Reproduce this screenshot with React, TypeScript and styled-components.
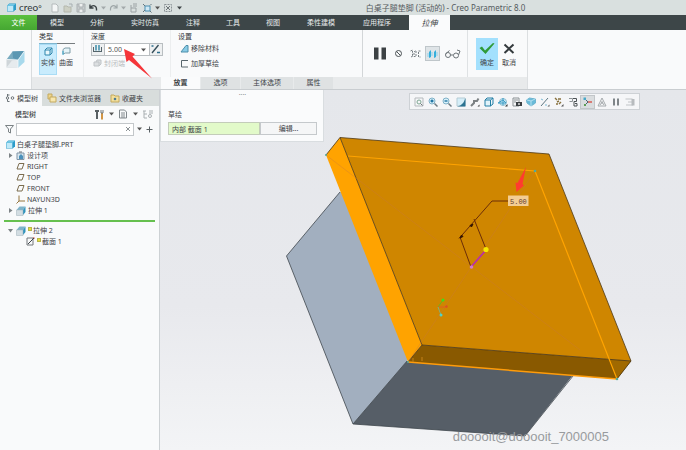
import React from "react";
import styled, { createGlobalStyle, css } from "styled-components";

const Global = createGlobalStyle`
  * { box-sizing: border-box; }
  body {
    margin: 0;
    font: 7px/11px "Noto Sans", "Noto Sans CJK SC", sans-serif;
    color: #3e4347;
    background: #e6e8ec;
  }
  button, input, select { font: inherit; color: inherit; }
  svg { display: block; flex: none; }
`;

const App = styled.div`
  min-height: 100vh;
  display: flex;
  flex-direction: column;
`;

const plainButton = css`
  border: 0;
  padding: 0;
  background: transparent;
  white-space: nowrap;
`;

/* ---------- title bar ---------- */
const TitleBar = styled.header`
  display: flex;
  align-items: center;
  height: 15px;
  background: #d9e0df;
`;
const Brand = styled.div`
  display: flex;
  align-items: center;
  gap: 3px;
  width: 50px;
  padding-left: 7px;
  font: 10px/14px "Lato", sans-serif;
  color: #30383b;
`;
const QuickTools = styled.div`
  display: flex;
  align-items: center;
  gap: 3px;
`;
const Title = styled.h1`
  flex: 1;
  margin: 0;
  padding-left: 22px;
  text-align: center;
  font-size: 8px;
  line-height: 14px;
  font-weight: 400;
  color: #555b5e;
`;
const IconButton = styled.button<{ $w?: number }>`
  ${plainButton}
  display: flex;
  align-items: center;
  justify-content: center;
  width: ${(p) => p.$w ?? 10}px;
  height: 11px;
`;

/* ---------- main tabs ---------- */
const MenuBar = styled.nav`
  display: flex;
  height: 15px;
  background: #3d4648;
`;
const MenuTab = styled.button<{ $kind?: "file" | "active"; $wide?: boolean }>`
  ${plainButton}
  padding: 0 ${(p) => (p.$wide ? 14 : 13)}px;
  line-height: 15px;
  color: #e8ecec;
  ${(p) =>
    p.$kind === "file" &&
    css`
      width: 37px;
      padding: 0;
      color: #fff;
      background: linear-gradient(#5cc03f, #45a732);
    `}
  ${(p) =>
    p.$kind === "active" &&
    css`
      width: 41px;
      margin-left: 4px;
      padding: 0;
      font-size: 8px;
      font-style: italic;
      color: #3a3f42;
      background: #fafbfc;
    `}
`;

/* ---------- ribbon ---------- */
const Ribbon = styled.section`
  position: relative;
  display: flex;
  height: 60px;
  background: #f9fafb;
  border-bottom: 1px solid #c9cdd0;
`;
const FeatureIcon = styled.div`
  width: 32px;
  padding: 20px 0 0 6px;
  border-right: 1px solid #d9dcde;
`;
const RibbonBody = styled.div`
  width: 496px;
  display: flex;
  flex-direction: column;
  border-right: 1px solid #dcdfe1;
`;
const Groups = styled.div`
  display: flex;
  height: 47px;
`;
const Group = styled.div<{ $w: number; $line?: boolean }>`
  width: ${(p) => p.$w}px;
  padding: 1px 0 0 7px;
  border-right: 1px solid ${(p) => (p.$line ? "#d3d6d8" : "#eceeef")};
`;
const GroupTitle = styled.div`
  line-height: 12px;
  color: #2f3437;
`;
const TypeRow = styled.div`
  display: flex;
`;
const TypeButton = styled.button<{ $on?: boolean }>`
  ${plainButton}
  display: flex;
  flex-direction: column;
  align-items: center;
  gap: 0;
  width: 18px;
  height: 32px;
  padding-top: 2px;
  border-top: 1px solid ${(p) => (p.$on ? "#7fb6cf" : "#777d80")};
  ${(p) => p.$on && "background: #c9ecfd; box-shadow: inset 0 0 0 1px #a9dcf5;"}
`;
const DepthRow = styled.div`
  display: flex;
  width: 72px;
  height: 13px;
  border: 1px solid #b9bec1;
  background: #fff;
`;
const DepthField = styled.div`
  flex: 1;
  display: grid;
  align-items: center;
  & > * { grid-area: 1 / 1; }
  & > svg { justify-self: end; margin-right: 3px; pointer-events: none; }
`;
const DepthSelect = styled.select`
  width: 100%;
  height: 11px;
  border: 0;
  padding: 0 3px;
  appearance: none;
  line-height: 11px;
  font-size: 7px;
  color: #555;
  background: #fff;
`;
const Framed = styled.button`
  ${plainButton}
  width: 13px;
  height: 11px;
  background: #eef0f1;
  border-right: 1px solid #b9bec1;
  &:last-child { border-right: 0; border-left: 1px solid #b9bec1; }
`;
const OptionButton = styled.button<{ $indent?: boolean }>`
  ${plainButton}
  display: flex;
  align-items: center;
  gap: 2px;
  height: 11px;
  margin-top: ${(p) => (p.$indent ? 2 : 0)}px;
  padding-left: 2px;
  margin-bottom: 4px;
  &:disabled { color: #b9bdc0; }
`;
const PreviewTools = styled.div`
  display: flex;
  align-items: center;
  gap: 4px;
  width: 105px;
  padding-left: 10px;
  border-right: 1px solid #dfe2e4;
`;
const PreviewButton = styled(IconButton)<{ $on?: boolean }>`
  height: 15px;
  ${(p) => p.$on && "background: #dfe4e7; box-shadow: inset 0 0 0 1px #bfc6ca;"}
`;
const Confirm = styled.div`
  display: flex;
  gap: 2px;
  padding: 8px 0 0 8px;
`;
const ConfirmButton = styled.button<{ $on?: boolean }>`
  ${plainButton}
  display: flex;
  flex-direction: column;
  align-items: center;
  gap: 2px;
  width: ${(p) => (p.$on ? 22 : 18)}px;
  height: 32px;
  padding-top: 4px;
  background: ${(p) => (p.$on ? "#a3e0fd" : "transparent")};
`;
const SubTabs = styled.div`
  display: flex;
  height: 12px;
  padding-left: 129px;
  background: #e8eaeb;
`;
const SubTab = styled.button<{ $on?: boolean; $wide?: boolean }>`
  ${plainButton}
  width: ${(p) => (p.$wide ? 53 : 40)}px;
  line-height: 12px;
  border-right: 1px solid #e8eaeb;
  background: ${(p) => (p.$on ? "#fafbfc" : "#dfe2e3")};
  font-weight: ${(p) => (p.$on ? 700 : 400)};
`;
const RibbonArrow = styled.svg`
  position: absolute;
  left: 122px;
  top: 17px;
`;

/* ---------- workspace ---------- */
const Workspace = styled.main`
  flex: 1;
  display: flex;
`;
const Sidebar = styled.aside`
  width: 160px;
  flex: none;
  background: #f9fafb;
  border-right: 1px solid #cdd1d4;
`;
const SideTabs = styled.div`
  display: flex;
  height: 16px;
  background: #d8dddc;
`;
const SideTab = styled.button<{ $w: number; $on?: boolean }>`
  ${plainButton}
  display: flex;
  align-items: center;
  gap: 2px;
  width: ${(p) => p.$w}px;
  padding-left: 5px;
  background: ${(p) => (p.$on ? "#f9fafb" : "transparent")};
`;
const TreeHeader = styled.div`
  display: flex;
  align-items: center;
  height: 16px;
  padding: 0 5px 0 15px;
  gap: 3px;
`;
const TreeTitle = styled.h2`
  flex: 1;
  margin: 0;
  font-size: 7px;
  font-weight: 500;
`;
const FilterRow = styled.div`
  display: flex;
  align-items: center;
  gap: 2px;
  height: 14px;
  padding: 0 5px;
`;
const FilterBox = styled.div`
  display: flex;
  width: 119px;
  height: 13px;
  border: 1px solid #c3c7ca;
  background: #fff;
`;
const FilterInput = styled.input`
  flex: 1;
  min-width: 0;
  border: 0;
  padding: 0 3px;
  outline: 0;
  background: transparent;
`;
const Tree = styled.ul`
  list-style: none;
  margin: 0;
  padding: 3px 0 4px 6px;
`;
const Node = styled.li<{ $level: number }>`
  display: flex;
  align-items: center;
  gap: 2px;
  height: 11px;
  padding-left: ${(p) => p.$level * 10}px;
`;
const Twisty = styled.button`
  ${plainButton}
  width: 8px;
  height: 8px;
  display: flex;
  align-items: center;
  justify-content: center;
`;
const NodeName = styled.span`
  display: flex;
  align-items: center;
  gap: 1px;
`;
const Flag = styled.i`
  width: 4px;
  height: 4px;
  margin-bottom: 3px;
  background: #e6e03c;
  border: 1px solid #b7b548;
`;
const InsertLine = styled.hr`
  height: 2px;
  margin: 0 4px;
  border: 0;
  background: #66c04f;
`;

const Canvas = styled.section`
  position: relative;
  flex: 1;
  min-width: 0;
  overflow: hidden;
  background: linear-gradient(#e5e7eb, #e8e9ed 60%, #f3f4f6);
`;
const Scene = styled.svg`
  position: absolute;
  inset: 0;
  width: 100%;
  height: 100%;
`;
const Popup = styled.div`
  position: absolute;
  left: 0;
  top: 0;
  width: 164px;
  padding: 0 6px 6px 7px;
  background: #fafbfc;
  border: 1px solid #d9dde0;
  border-top: 0;
`;
const Grip = styled.div`
  height: 19px;
  text-align: center;
  line-height: 10px;
  color: #8b9093;
`;
const PopupRow = styled.div`
  display: flex;
  margin-top: 2px;
`;
const Collector = styled.input`
  width: 92px;
  height: 13px;
  padding: 0 3px;
  border: 1px solid #c3ccb9;
  background: #e2fac9;
`;
const EditButton = styled.button`
  flex: 1;
  height: 13px;
  padding: 0;
  line-height: 10px;
  border: 1px solid #c5c9cc;
  background: #f5f6f7;
`;
const ViewTools = styled.div`
  position: absolute;
  left: 249px;
  top: 3px;
  display: flex;
  align-items: center;
  height: 17px;
  padding: 0 2px;
  border: 1px solid #cdd1d5;
  background: #f5f6f8;
`;
const ViewButton = styled.button<{ $on?: boolean }>`
  ${plainButton}
  display: flex;
  align-items: center;
  justify-content: center;
  width: ${(p) => (p.$on ? 15 : 14)}px;
  height: 14px;
  ${(p) => p.$on && "background: #dadddf; box-shadow: inset 0 0 0 1px #c2c6c9;"}
`;
const Watermark = styled.div`
  position: absolute;
  right: 77px;
  bottom: 5px;
  font: 13px/16px "Liberation Sans", sans-serif;
  color: #989b9e;
`;

/* ---------- icons ---------- */
const Ico: React.FC<{ s?: number; w?: number; children: React.ReactNode }> = ({ s = 10, w, children }) => (
  <svg width={w ?? s} height={s} viewBox={`0 0 ${w ?? s} ${s}`} fill="none" stroke="#6d7478" strokeWidth="1" aria-hidden>
    {children}
  </svg>
);
const Caret = ({ c = "#555" }: { c?: string }) => (
  <svg width="5" height="4" viewBox="0 0 5 4" aria-hidden><path d="M0 0.5h5L2.5 3.5z" fill={c} /></svg>
);
const Cube = ({ s = 9 }: { s?: number }) => (
  <svg width={s} height={s} viewBox="0 0 10 10" aria-hidden>
    <path d="M0 3l2.500-2.500H10V7L7.500 9.500H0z" fill="#2d9cc9" /><path d="M0.500 3h6.500v6H0.500z" fill="#bfe9f8" />
    <path d="M0.500 3l2-2h7L7 3z" fill="#73c8e6" />
  </svg>
);
const FeatureBox = () => (
  <svg width="19" height="19" viewBox="0 0 19 19" aria-hidden>
    <path d="M0.500 9.500L6.500 1.500 18.500 1 12 10z" fill="#79abc0" />
    <path d="M6.500 1.500L18.500 1 12 10 7 8z" fill="#5b97b2" />
    <path d="M18.500 1V12L12 18V10z" fill="#a8d9ec" />
    <path d="M0.500 9.500L12 10V18L0.500 17.500z" fill="#cfd5d9" />
    <path d="M0.500 17.500L6 10.500 12 10V18z" fill="#e6ebee" />
    <path d="M0.500 9.500L12 10 18.500 1M12 10V18" fill="none" stroke="#f3f8fa" strokeWidth="0.800" />
  </svg>
);
const Extrude = () => (
  <svg width="10" height="10" viewBox="0 0 10 10" aria-hidden>
    <path d="M0.500 4L3.500 0.500H9.500L7 4z" fill="#7fb3c9" />
    <path d="M9.500 0.500V6L7 9V4z" fill="#2e93bd" />
    <path d="M0.500 4H7V9.500H0.500z" fill="#d3dde2" stroke="#9fb0b8" strokeWidth="0.500" />
  </svg>
);
const Plane = () => <Ico s={9}><path d="M3 1.500h5L6 7H1z" stroke="#7b6c4e" /></Ico>;
const Csys = () => <Ico s={9}><path d="M3 0.500V6h6M3 6L0.500 8.500" stroke="#94743c" /></Ico>;
const Design = () => (
  <Ico s={9}><path d="M1 2h7v6.500H1z" fill="#dbe8f0" stroke="#8195a6" /><path d="M3 5l2-2 2 2v3H3z" fill="#4c91bb" stroke="none" /><path d="M3 1h3" /></Ico>
);
const Sketch = () => <Ico s={9}><path d="M1 1h6v7H1z" stroke="#72777a" /><path d="M2 7l6-6" stroke="#3e4448" /><path d="M7.500 0l1 1.500" stroke="#d65a45" /></Ico>;
const Mag = ({ sign }: { sign: string }) => (
  <Ico><circle cx="4" cy="4" r="3" stroke="#7fb1c8" fill="#d8f0fa" /><path d="M6.500 6.500L9.500 9.500" stroke="#6d7a81" strokeWidth="1.500" />
    <path d={sign === "+" ? "M2.500 4h3M4 2.500v3" : "M2.500 4h3"} stroke="#126b9c" strokeWidth="1.300" /></Ico>
);

const quick: { label: string; w: number; icon: React.ReactNode }[] = [
  { label: "新建", w: 10, icon: <Ico><path d="M2 1h4l2 2v6H2z" fill="#f4f6f6" stroke="#b4babb" /></Ico> },
  { label: "打开", w: 10, icon: <Ico><path d="M1 3h3l1 1h3v5H1z" fill="#cdd0c4" stroke="#b4b7ac" /><path d="M6 1h3v3" stroke="#a7afb2" /></Ico> },
  { label: "保存", w: 10, icon: <Ico><path d="M1 1h8v8H1z" fill="#c6cbcc" stroke="#aab0b2" /><path d="M3 1v3h4V1M3 9V6h4v3" fill="#eef0f0" stroke="#aab0b2" /></Ico> },
  { label: "撤消", w: 9, icon: <Ico s={9}><path d="M1.500 4.500C3.500 1.500 8 2 7.500 7.500M1 1.500v3.500h3.500" stroke="#3c4346" strokeWidth="1.400" /></Ico> },
  { label: "撤消列表", w: 5, icon: <Caret c="#a3a9ab" /> },
  { label: "重做", w: 9, icon: <Ico s={9}><path d="M7.500 4.500C5.500 1.500 1 2 1.500 7.500M8 1.500v3.500H4.500" stroke="#9da5a7" strokeWidth="1.200" /></Ico> },
  { label: "重做列表", w: 5, icon: <Caret c="#a3a9ab" /> },
  { label: "重新生成", w: 10, icon: <Ico><path d="M2 5h5v4H2zM4 3h4M4 1h4M2 2v3" stroke="#9ba2a4" /></Ico> },
  { label: "窗口", w: 10, icon: <Ico><path d="M3 3h5v5H3z" fill="#cfe8f4" stroke="#4b8eb0" /><path d="M1 1l2 2M8 8l1.500 1.500M8 2.500L9.500 1M1 9l2-2" stroke="#63777f" /></Ico> },
  { label: "窗口列表", w: 5, icon: <Caret /> },
  { label: "关闭", w: 10, icon: <Ico><path d="M1.500 1.500h7v7h-7z" stroke="#8b9396" strokeDasharray="2 1" /><path d="M3 3l4 4M7 3L3 7" stroke="#6d7578" /></Ico> },
  { label: "自定义", w: 7, icon: <Caret c="#3f4548" /> },
];

const views: { label: string; on?: boolean; icon: React.ReactNode }[] = [
  { label: "重新调整", icon: <Ico><path d="M1 1h8v8H1z" stroke="#b5babd" /><circle cx="5" cy="5" r="2" stroke="#7fa893" /><path d="M6.500 6.500l2 2" /></Ico> },
  { label: "放大", icon: <Mag sign="+" /> },
  { label: "缩小", icon: <Mag sign="-" /> },
  { label: "重画", icon: <Ico><path d="M1 1h8v8H1z" fill="#d5eef8" stroke="#b5ccd5" /><path d="M9.500 1v8.500H1c5-1 7-4 8.500-8.500z" fill="#2c7391" stroke="none" /></Ico> },
  { label: "渲染", icon: <Ico><path d="M1 9l3-3V4h3L8.500 1.500" stroke="#7b8083" strokeWidth="2" /><path d="M9.500 7.500v2h-2z" fill="#333" stroke="none" /></Ico> },
  { label: "显示样式", icon: <Ico><path d="M1 3h5.500v6H1zM1 3l2-2h6L6.500 3M9 1v6L6.500 9" fill="#e1f3fa" stroke="#247fa5" /></Ico> },
  { label: "已保存方向", icon: <Ico><circle cx="5" cy="5" r="3.500" fill="#c7e9f7" stroke="#8dbdd0" /><path d="M0 6l5-3 3 3H0M5 1v7" stroke="#3f9cc4" /><path d="M9.500 7v2.500H7z" fill="#333" stroke="none" /></Ico> },
  { label: "视图管理器", icon: <Ico><path d="M1 1h6v8H1zM2 3h4M2 5h2" stroke="#8a9194" /><path d="M4 5h6v4H4z" fill="#3b4043" stroke="none" /><circle cx="7" cy="7" r="1" fill="#ddd" stroke="none" /></Ico> },
  { label: "透视图", icon: <Ico><path d="M0.500 3l3-2 6 1v4L5 9 1 6z" fill="#69bbd9" stroke="#6fb4cf" /><path d="M1 3l4 1 4-2M5 4v5" stroke="#b5e0f0" /></Ico> },
  { label: "基准显示", icon: <Ico><path d="M1 9L8 1" stroke="#5e7681" /><path d="M1 2l2 1M5 8h2" stroke="#7dbbd6" /><path d="M9.500 7.500v2h-2z" fill="#555" stroke="none" /></Ico> },
  { label: "基准过滤器", icon: <Ico><path d="M1 1l2 2M4 2h3M3 5l2-1M2 7h2M5 7l2-2" stroke="#88723f" strokeWidth="1.400" /><path d="M9.500 7v2.500H7z" fill="#555" stroke="none" /></Ico> },
  { label: "注释显示", icon: <Ico><path d="M1 1.500h3.500v3H1.500" stroke="#8c9295" /><path d="M5 1.500h3.500v3H6V9h3V6.500H7" stroke="#4c5255" /></Ico> },
  { label: "旋转中心", on: true, icon: <Ico><path d="M2 2l3 3-3 3" stroke="#4d6470" /><path d="M5 5h4" stroke="#d95a52" strokeWidth="1.500" /><path d="M0.500 0.500h2.500v2.500H0.500z" fill="#48a8c9" stroke="none" /><path d="M1 7h2v2H1z" fill="#5d9d55" stroke="none" /></Ico> },
  { label: "模拟", icon: <Ico><path d="M5 1l4 8H1z" stroke="#a5aaad" /><path d="M5 4v3M3 8l2-3 2 3" stroke="#a5aaad" /></Ico> },
  { label: "暂停", icon: <Ico><path d="M3 1.500v7M7 1.500v7" stroke="#7f8589" strokeWidth="2" /></Ico> },
  { label: "更多", icon: <Ico><path d="M0.500 2h7M3 5h5M1 8h7" stroke="#c0c4c7" /><path d="M6.500 2h3v6.500h-3z" fill="#b7bbbe" stroke="none" /></Ico> },
];

type NodeT = { name: string; level: number; twisty?: "open" | "closed"; icon: React.ReactNode; flag?: boolean };
const upper: NodeT[] = [
  { name: "白桌子腿垫脚.PRT", level: 0, icon: <Cube /> },
  { name: "设计项", level: 0, twisty: "closed", icon: <Design /> },
  { name: "RIGHT", level: 1, icon: <Plane /> },
  { name: "TOP", level: 1, icon: <Plane /> },
  { name: "FRONT", level: 1, icon: <Plane /> },
  { name: "NAYUN3D", level: 1, icon: <Csys /> },
  { name: "拉伸 1", level: 0, twisty: "closed", icon: <Extrude /> },
];
const lower: NodeT[] = [
  { name: "拉伸 2", level: 0, twisty: "open", icon: <Extrude />, flag: true },
  { name: "截面 1", level: 2, icon: <Sketch />, flag: true },
];

const TreeNodes = ({ items }: { items: NodeT[] }) => (
  <Tree>
    {items.map((n) => (
      <Node key={n.name} $level={n.level}>
        {n.twisty && (
          <Twisty aria-label={n.name} aria-expanded={n.twisty === "open"}>
            <svg width="5" height="5" viewBox="0 0 5 5"><path d={n.twisty === "open" ? "M0 1h5L2.500 4.500z" : "M1 0v5l3.500-2.500z"} fill="#7d8386" /></svg>
          </Twisty>
        )}
        {n.icon}
        <NodeName>{n.flag && <Flag />}{n.name}</NodeName>
      </Node>
    ))}
  </Tree>
);

const Model = () => (
  <Scene viewBox="160 90 526 360" preserveAspectRatio="xMinYMin meet" role="img" aria-label="模型">
    <g strokeLinejoin="round" strokeWidth="0.800">
      <path d="M340 192L286.500 256 353 424 412 355 350 192z" fill="#a2afbf" />
      <path d="M353 424L407 361 573 375 525 436z" fill="#565e67" />
      <path d="M340 192L286.500 256 353 424 525 436 573 376M353 424L407 361" fill="none" stroke="#3f464c" />
      <path d="M326 155L340 137.500 422 345 408 362z" fill="#ffa300" />
      <path d="M340 137.500L549 154 631 361 422 345z" fill="#cf8600" />
      <path d="M408 362L422 345 631 361 617 379z" fill="#895900" />
      <path d="M617 379L631 361 610 359.500z" fill="#a06900" />
      <path d="M326 155L340 137.500 549 154 631 361 422 345 340 137.500M422 345L408 362M631 361L617 379" fill="none" stroke="#4c3714" />
    </g>
    <path d="M326 155L580 350M535 171L408 362" stroke="#c9793f" strokeWidth="0.700" opacity="0.500" fill="none" />
    <path d="M348 156L535 171 617 379" fill="none" stroke="#ffa400" strokeWidth="1.200" />
    <path d="M408 362L617 379" stroke="#ff9c0a" strokeWidth="1.500" />
    <path d="M413 358v4M422 357v4" stroke="#c48218" />
    <g fill="#53a99c"><circle cx="535" cy="171" r="1.300" /><circle cx="326" cy="155" r="1" /><circle cx="617" cy="379" r="1.300" /><circle cx="408" cy="362" r="1" /></g>
    <g fill="none" stroke="#6b2d08">
      <path d="M508 201H492L459 238.500M460 237L471 267M474 219L486 249" />
    </g>
    <path d="M460 238l1.500-3 1.500 1.500zM473 224l-1.500 3-1.500-1.500z" fill="#351400" stroke="#351400" />
    <path d="M471 267L486 250" stroke="#b82bb0" strokeWidth="1.600" />
    <circle cx="471.500" cy="267" r="1.800" fill="#d47bc9" />
    <circle cx="486" cy="249.500" r="2.600" fill="#f5e800" />
    <path d="M508 195.500h20.500v10.500H508z" fill="#f3cd94" />
    <text x="510" y="203.500" fontSize="7" fontFamily="Liberation Mono, monospace" fill="#653c2b">5.00</text>
    <path d="M526 167L522.500 184 524 185.500 516.500 192 515.500 182.500 517.500 183z" fill="#ff3b30" />
    <g strokeWidth="0.900">
      <path d="M438 307l5-7" stroke="#62b91b" /><path d="M438 307h9" stroke="#e45c22" /><path d="M438 307l3 8" stroke="#77b48b" />
      <circle cx="443" cy="300" r="1.500" fill="#3fe01c" /><circle cx="441" cy="315" r="1.500" fill="#4fd2c8" /><circle cx="446.500" cy="306.500" r="1.200" fill="#dd5122" />
    </g>
  </Scene>
);

export default function Page() {
  return (
    <App>
      <Global />
      <TitleBar>
        <Brand><Cube /><span>creo<small>°</small></span></Brand>
        <QuickTools>
          {quick.map((q) => <IconButton key={q.label} $w={q.w} aria-label={q.label}>{q.icon}</IconButton>)}
        </QuickTools>
        <Title>白桌子腿垫脚 (活动的) - Creo Parametric 8.0</Title>
      </TitleBar>

      <MenuBar>
        <MenuTab $kind="file">文件</MenuTab>
        {["模型", "分析", "实时仿真", "注释", "工具", "视图", "柔性建模", "应用程序"].map((t) => (
          <MenuTab key={t} $wide={t.length > 2}>{t}</MenuTab>
        ))}
        <MenuTab $kind="active">拉伸</MenuTab>
      </MenuBar>

      <Ribbon>
        <FeatureIcon><FeatureBox /></FeatureIcon>
        <RibbonBody>
          <Groups>
            <Group $w={52}>
              <GroupTitle>类型</GroupTitle>
              <TypeRow>
                <TypeButton $on><Ico s={11}><path d="M2 4h5v5H2zM2 4l2-2h5L7 4M9 2v5L7 9" fill="#e9f7fc" stroke="#2c86ad" /></Ico>实体</TypeButton>
                <TypeButton><Ico s={11}><path d="M2 8V3.500L4 2h5v5H4.500z" fill="#e6f4f8" stroke="#7f9ca7" /><path d="M2 9V5" stroke="#38a7cd" /></Ico>曲面</TypeButton>
              </TypeRow>
            </Group>
            <Group $w={87}>
              <GroupTitle as="label" htmlFor="depth">深度</GroupTitle>
              <DepthRow>
                <Framed aria-label="深度选项"><Ico s={11}><path d="M4 1v5.500M7 1v5.500" stroke="#3187a5" strokeWidth="1.400" /><path d="M1 7.500h9M1.500 3v4M9.500 3v4" stroke="#55656c" /></Ico></Framed>
                <DepthField>
                  <DepthSelect id="depth" defaultValue="5.00"><option>5.00</option></DepthSelect>
                  <Caret />
                </DepthField>
                <Framed aria-label="反向"><Ico s={11}><path d="M2 9L8.500 1" stroke="#344d59" strokeWidth="1.300" /><path d="M1.500 2h2M7 8.500h3" stroke="#2e6e8d" strokeWidth="1.500" /></Ico></Framed>
              </DepthRow>
              <OptionButton disabled $indent><Ico s={9}><path d="M1 3h5v4H1zM3 3l1-2h4v4L6 7" fill="#dcdfe1" stroke="#c0c4c7" /></Ico>封闭端</OptionButton>
            </Group>
            <Group $w={192} $line>
              <GroupTitle>设置</GroupTitle>
              <OptionButton><Ico s={9}><path d="M1 8l5-6.500h2V8z" fill="#8acce6" stroke="#4d8eab" /></Ico>移除材料</OptionButton>
              <OptionButton><Ico s={9}><path d="M8 1.500H1.500v6.500H8" stroke="#58666d" /></Ico>加厚草绘</OptionButton>
            </Group>
            <PreviewTools>
              <PreviewButton $w={14} aria-label="暂停"><Ico s={13} w={14}><path d="M1 0.500h4.500v12H1zM8.500 0.500H13v12H8.500z" fill="#3c4144" stroke="none" /></Ico></PreviewButton>
              <PreviewButton $w={15} aria-label="无预览"><Ico s={9}><circle cx="4.500" cy="4.500" r="3" stroke="#4c5255" /><path d="M2.500 2.500l4 4" stroke="#4c5255" /></Ico></PreviewButton>
              <PreviewButton $w={11} aria-label="分离"><Ico s={10} w={11}><path d="M0.500 2l2-1v6M4 3l2-1.500v6H4zM10.500 2H8.500v6h2M1 8l2-1" stroke="#777f83" strokeDasharray="2 1" /></Ico></PreviewButton>
              <PreviewButton $w={15} $on aria-label="连接"><Ico s={10} w={11}><path d="M2 3l2-2v7l-2 1zM7 3l2-2v7L7 9z" fill="#36aedb" stroke="none" /><path d="M1 4v4M5 3v4M10 3v4" stroke="#8bd3ef" /></Ico></PreviewButton>
              <PreviewButton $w={17} aria-label="校验"><Ico s={10} w={17}><circle cx="4" cy="6" r="2.500" /><circle cx="12" cy="6.500" r="2.500" /><path d="M6.500 6h3M1.500 5l4-3.500M14.500 6L16 2l-3-1" /></Ico></PreviewButton>
            </PreviewTools>
            <Confirm>
              <ConfirmButton $on><svg width="16" height="13" viewBox="0 0 16 13"><path d="M0.500 6L3 4.500 6 8.500 14 1l1.500 0.500L6.500 12z" fill="#2f9a36" /></svg>确定</ConfirmButton>
              <ConfirmButton><svg width="12" height="13" viewBox="0 0 12 13"><path d="M1.500 2.500l9 8.500M10.500 2.500l-9 8.500" stroke="#343a3d" strokeWidth="2" /></svg>取消</ConfirmButton>
            </Confirm>
          </Groups>
          <SubTabs>
            <SubTab $on>放置</SubTab><SubTab>选项</SubTab><SubTab $wide>主体选项</SubTab><SubTab>属性</SubTab>
          </SubTabs>
        </RibbonBody>
        <RibbonArrow width="32" height="32" viewBox="0 0 32 32" aria-hidden>
          <path d="M2 2L13 7 10.500 9.500 30 31.500 7 13 4.500 15z" fill="#f5363a" />
        </RibbonArrow>
      </Ribbon>

      <Workspace>
        <Sidebar>
          <SideTabs>
            <SideTab $w={42} $on><Ico><path d="M2.500 1v7.500M2.500 2h2M2.500 8.500h2M7 5h2" /><circle cx="2.500" cy="5" r="1.200" fill="#fff" /><circle cx="7.500" cy="5" r="1.300" fill="#fff" /></Ico>模型树</SideTab>
            <SideTab $w={63}><Ico><path d="M1 1h4v5H1z" fill="#f0d68a" stroke="#c3a95e" /><path d="M3 4h6v5H3z" fill="#f8e7ae" stroke="#c3a95e" /></Ico>文件夹浏览器</SideTab>
            <SideTab $w={50}><Ico><path d="M1 2h3l1 1h4v6H1z" fill="#f3df9b" stroke="#c3a95e" /><path d="M5 4.500l1.500 1.500L5 7.500 3.500 6z" fill="#356e93" stroke="none" /></Ico>收藏夹</SideTab>
          </SideTabs>
          <TreeHeader>
            <TreeTitle>模型树</TreeTitle>
            <IconButton aria-label="设置"><Ico s={11} w={10}><path d="M1 2h4M3 2v8" stroke="#596064" strokeWidth="2" /><path d="M8 4v6.500" stroke="#d19545" strokeWidth="2" /><path d="M7 1v3h2V1" /></Ico></IconButton>
            <IconButton $w={8} aria-label="设置列表"><Caret /></IconButton>
            <IconButton aria-label="显示"><Ico><path d="M1.500 1h5l2 2v6h-7zM3 4h4M3 6h4M3 8h4" stroke="#81888c" /></Ico></IconButton>
            <IconButton $w={8} aria-label="显示列表"><Caret /></IconButton>
            <IconButton $w={12} aria-label="搜索"><Ico s={10} w={12}><path d="M1 2h3M2 2v7M2 5h3M2 9h3M7 2h4M7 4h4" stroke="#aab0b3" /><circle cx="8" cy="7" r="1.500" stroke="#aab0b3" /></Ico></IconButton>
          </TreeHeader>
          <FilterRow>
            <Ico s={10} w={9}><path d="M0.500 1.500h8L5.500 5v4L3.500 8V5z" stroke="#7b8285" /></Ico>
            <FilterBox>
              <FilterInput aria-label="过滤" />
              <IconButton aria-label="清除"><Ico s={6}><path d="M1 1l4 4M5 1L1 5" stroke="#8b9194" /></Ico></IconButton>
            </FilterBox>
            <IconButton $w={7} aria-label="过滤列表"><Caret /></IconButton>
            <IconButton aria-label="添加"><Ico s={7}><path d="M3.500 0.500v6M0.500 3.500h6" stroke="#596064" /></Ico></IconButton>
          </FilterRow>
          <TreeNodes items={upper} />
          <InsertLine />
          <TreeNodes items={lower} />
        </Sidebar>

        <Canvas>
          <Model />
          <Popup>
            <Grip>····</Grip>
            <label htmlFor="sketch">草绘</label>
            <PopupRow>
              <Collector id="sketch" defaultValue="内部 截面 1" />
              <EditButton>编辑...</EditButton>
            </PopupRow>
          </Popup>
          <ViewTools>
            {views.map((v) => <ViewButton key={v.label} $on={v.on} aria-label={v.label}>{v.icon}</ViewButton>)}
          </ViewTools>
          <Watermark>dooooit@dooooit_7000005</Watermark>
        </Canvas>
      </Workspace>
    </App>
  );
}
